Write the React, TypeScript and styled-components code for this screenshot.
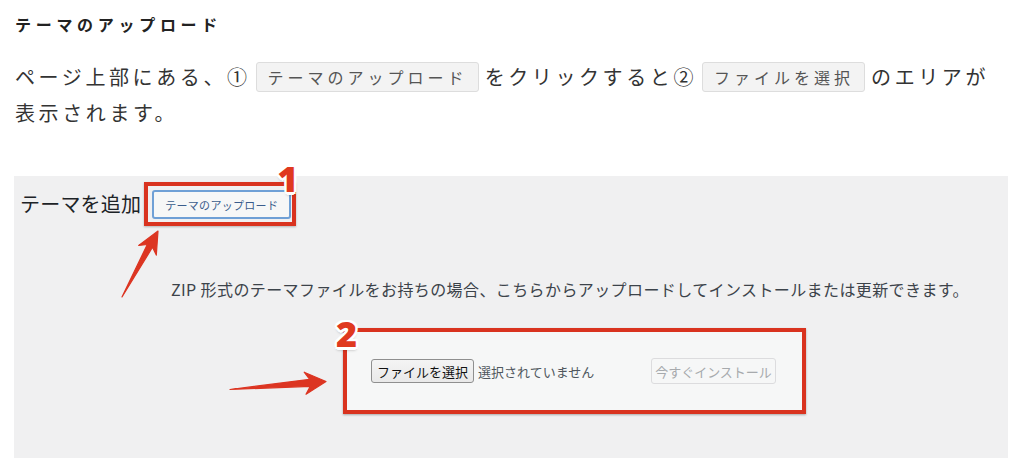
import React from "react";
import styled, { createGlobalStyle } from "styled-components";

const GlobalStyle = createGlobalStyle`
  html, body { margin: 0; padding: 0; background: #ffffff; }
  body {
    font-family: "Noto Sans CJK JP", "Noto Sans", sans-serif;
    color: #333333;
  }
`;

const RED = "#d9331f";

const Page = styled.div`
  width: 1024px;
  height: 469px;
  overflow: hidden;
  padding-top: 12px;
  box-sizing: border-box;
`;

const Heading = styled.h3`
  margin: 0 0 0 15px;
  font-size: 16px;
  line-height: 24px;
  font-weight: 700;
  letter-spacing: 4.7px;
  color: #222222;
`;

const Para = styled.p`
  margin: 23px 0 0 15px;
  font-size: 20px;
  line-height: 36px;
  letter-spacing: 3.6px;
  color: #333333;
`;

const Code = styled.span`
  display: inline-block;
  vertical-align: 1px;
  margin: 0 6px 0 5px;
  padding: 0 10px 0 11px;
  line-height: 28px;
  font-size: 16px;
  letter-spacing: 4px;
  color: #555555;
  background: #f3f3f3;
  border: 1px solid #dddddd;
  border-radius: 3px;
`;

const Panel = styled.section`
  position: relative;
  margin: 45px 0 0 14px;
  width: 994px;
  height: 282px;
  background: #f0f0f1;
`;

const Overlay = styled.svg`
  position: absolute;
  left: 0;
  top: 0;
  width: 994px;
  height: 282px;
  pointer-events: none;
  z-index: 2;
`;

const HeaderRow = styled.div`
  display: flex;
  align-items: center;
  gap: 3px;
  padding: 6px 0 0 6px;
`;

const PageTitle = styled.h1`
  margin: 0;
  font-size: 20px;
  font-weight: 400;
  line-height: 28px;
  letter-spacing: 0.2px;
  color: #1d2327;
`;

const Highlight = styled.div`
  position: relative;
  display: inline-flex;
  padding: 4px 1px 3px 4px;
  border: 4px solid ${RED};
  box-shadow: 0 1px 2px rgba(0, 0, 0, 0.25);
`;

const UploadToggle = styled.button`
  box-sizing: border-box;
  width: 139px;
  height: 29px;
  padding: 0;
  font-family: "Noto Sans CJK JP", sans-serif;
  font-size: 11px;
  letter-spacing: 0.3px;
  color: #3a5d8c;
  background: #f6f7f7;
  border: 2px solid #6fa0d6;
  border-radius: 3px;
`;

const Num = styled.span<{ $left: number; $top: number }>`
  position: absolute;
  left: ${(p) => p.$left}px;
  top: ${(p) => p.$top}px;
  z-index: 3;
  font-family: "Open Sans", "DejaVu Sans", sans-serif;
  font-weight: 800;
  font-size: 36px;
  line-height: 1;
  color: #e0391f;
  text-shadow:
    2.5px 0 0 #fff, -2.5px 0 0 #fff, 0 2.5px 0 #fff, 0 -2.5px 0 #fff,
    1.8px 1.8px 0 #fff, -1.8px 1.8px 0 #fff, 1.8px -1.8px 0 #fff, -1.8px -1.8px 0 #fff,
    0 3px 3px rgba(0, 0, 0, 0.3);
`;

const UploadArea = styled.div`
  padding-left: 118px;
`;

const Help = styled.p`
  margin: 51px 0 0;
  text-align: center;
  font-size: 16px;
  line-height: 24px;
  letter-spacing: 0.4px;
  color: #3c434a;
`;

const Form = styled.div`
  position: relative;
  box-sizing: border-box;
  width: 463px;
  height: 86px;
  margin: 27px 0 0 211px;
  padding: 0 26px 0 24px;
  display: flex;
  align-items: center;
  justify-content: space-between;
  background: #f6f7f7;
  border: 4px solid ${RED};
  box-shadow: 0 1px 2px rgba(0, 0, 0, 0.3);
`;

const FileGroup = styled.div`
  display: flex;
  align-items: center;
  gap: 4px;
`;

const FileButton = styled.button`
  box-sizing: border-box;
  height: 24px;
  padding: 0 5px;
  font-family: "Noto Sans CJK JP", sans-serif;
  font-size: 13px;
  color: #111111;
  background: linear-gradient(#f4f4f4, #e9e9e9);
  border: 1px solid #8f8f8f;
  border-radius: 3px;
`;

const FileStatus = styled.span`
  font-size: 13px;
  color: #50575e;
`;

const InstallButton = styled.button`
  box-sizing: border-box;
  width: 125px;
  height: 26px;
  padding: 0;
  font-family: "Noto Sans CJK JP", sans-serif;
  font-size: 13px;
  color: #a7aaad;
  background: #f6f7f7;
  border: 1px solid #dcdcde;
  border-radius: 3px;
`;

export default function App() {
  return (
    <>
      <GlobalStyle />
      <Page>
        <Heading>テーマのアップロード</Heading>
        <Para>
          ページ上部にある、①<Code>テーマのアップロード</Code>をクリックすると②
          <Code>ファイルを選択</Code>のエリアが
          <br />
          表示されます。
        </Para>
        <Panel>
          <Overlay viewBox="0 0 994 282">
            <polygon
              points="108,121 138.5,71.3 142.3,79.1 144,55 124.7,69.5 133.3,68.5"
              fill="#dc3522"
              stroke="#dc3522"
              strokeWidth="1.2"
              strokeLinejoin="round"
            />
            <polygon
              points="216,213.5 296.3,210.3 292,218.2 312,205.5 290.2,196.2 295.7,203.3"
              fill="#dc3522"
              stroke="#dc3522"
              strokeWidth="1.2"
              strokeLinejoin="round"
            />
          </Overlay>
          <HeaderRow>
            <PageTitle>テーマを追加</PageTitle>
            <Highlight>
              <UploadToggle>テーマのアップロード</UploadToggle>
              <Num $left={129} $top={-25}>1</Num>
            </Highlight>
          </HeaderRow>
          <UploadArea>
            <Help>
              ZIP 形式のテーマファイルをお持ちの場合、こちらからアップロードしてインストールまたは更新できます。
            </Help>
            <Form>
              <Num $left={-11} $top={-16}>2</Num>
              <FileGroup>
                <FileButton>ファイルを選択</FileButton>
                <FileStatus>選択されていません</FileStatus>
              </FileGroup>
              <InstallButton disabled>今すぐインストール</InstallButton>
            </Form>
          </UploadArea>
        </Panel>
      </Page>
    </>
  );
}
